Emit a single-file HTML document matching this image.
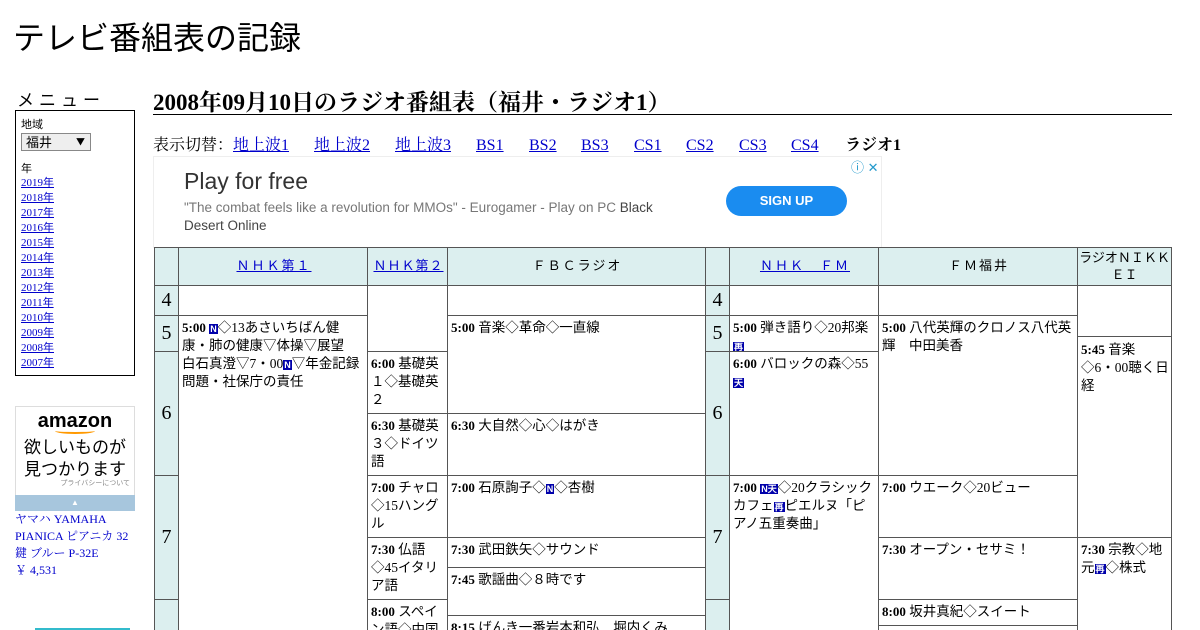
<!DOCTYPE html>
<html style="overflow:hidden;height:630px"><head><meta charset="utf-8"><style>
body{margin:0;width:1200px;height:630px;overflow:hidden;background:#fff;font-family:"Liberation Serif","Noto Serif CJK SC","Noto Sans CJK JP",serif;color:#000;position:relative}
.a{position:absolute}
a{color:#00c}
.c{position:absolute;box-sizing:border-box;border:1px solid #555;font-size:13.5px;line-height:18px;padding:3px 1px 0 3px;background:#fff;overflow:hidden;font-family:"Liberation Serif","Noto Sans CJK JP",serif}
.c b{font-size:13px}
.h{background:#dcefef;text-align:center;font-family:"Liberation Sans","Noto Sans CJK JP",sans-serif;font-size:13px;letter-spacing:2px;padding-top:9px}
.t{background:#dcefef;text-align:center;font-size:20px;padding:0}
.n{display:inline-block;background:#00a;color:#fff;font-size:9px;line-height:10px;padding:0 1px;font-family:"Liberation Sans",sans-serif;font-weight:bold}
.g{font-family:"Liberation Sans","Noto Sans CJK JP",sans-serif}
.l{position:absolute;top:137px;font-size:16px;line-height:18px;height:18px}
</style></head><body>
<div class="a g" style="left:13px;top:13px;font-size:32px;font-family:'Noto Sans CJK JP',sans-serif;font-weight:400">テレビ番組表の記録</div>
<div class="a g" style="left:17px;top:86px;font-size:17px;letter-spacing:5px;font-family:'Noto Sans CJK JP',sans-serif">メニュー</div>
<div class="a" style="left:15px;top:110px;width:118px;height:264px;border:1px solid #000;font-size:11px;font-family:'Noto Sans CJK JP',sans-serif">
<div style="margin:5px 0 0 5px">地域</div>
<div style="margin:1px 0 0 5px;width:64px;height:16px;border:1px solid #888;background:#eee;font-size:13px;line-height:16px;padding-left:4px;position:relative">福井<span style="position:absolute;right:5px;font-size:9px">▼</span></div>
<div style="margin:9px 0 0 5px">年</div>
<div style="margin:0 0 0 5px;line-height:15px;font-family:'Liberation Serif','Noto Sans CJK JP',serif"><a href="#">2019年</a><br><a href="#">2018年</a><br><a href="#">2017年</a><br><a href="#">2016年</a><br><a href="#">2015年</a><br><a href="#">2014年</a><br><a href="#">2013年</a><br><a href="#">2012年</a><br><a href="#">2011年</a><br><a href="#">2010年</a><br><a href="#">2009年</a><br><a href="#">2008年</a><br><a href="#">2007年</a></div>
</div>
<div class="a" style="left:15px;top:406px;width:118px;height:88px;border:1px solid #ddd;text-align:center;font-family:'Noto Sans CJK JP',sans-serif">
<div style="font-family:'Liberation Sans',sans-serif;font-weight:bold;font-size:20px;line-height:22px;margin-top:3px">amazon</div>
<div style="width:40px;height:4px;border-bottom:2px solid #f90;border-radius:0 0 50% 50%;margin:-4px auto 0"></div>
<div style="font-size:17px;line-height:22px;margin-top:1px">欲しいものが<br>見つかります</div>
<div style="font-size:7px;color:#888;text-align:right;padding-right:4px;line-height:9px">プライバシーについて</div></div>
<div class="a" style="left:15px;top:495px;width:120px;height:16px;background:#a7c6dd;color:#fff;text-align:center;font-size:8px;line-height:16px">▲</div>
<div class="a" style="left:15px;top:511px;width:125px;font-size:12px;line-height:17px;color:#00c">ヤマハ YAMAHA PIANICA ピアニカ 32 鍵 ブルー P-32E<br>￥ 4,531</div>
<div class="a" style="left:35px;top:628px;width:95px;height:2px;background:#3bc"></div>

<div class="a" style="left:153px;top:84px;font-size:23px;font-weight:bold">2008年09月10日のラジオ番組表（福井・ラジオ1）</div>
<div class="a" style="left:153px;top:114px;width:1019px;height:1px;background:#000"></div>
<div class="l" style="left:153px">表示切替：</div>
<a class="l" style="left:233px" href="#">地上波1</a>
<a class="l" style="left:314px" href="#">地上波2</a>
<a class="l" style="left:395px" href="#">地上波3</a>
<a class="l" style="left:476px" href="#">BS1</a>
<a class="l" style="left:529px" href="#">BS2</a>
<a class="l" style="left:581px" href="#">BS3</a>
<a class="l" style="left:634px" href="#">CS1</a>
<a class="l" style="left:686px" href="#">CS2</a>
<a class="l" style="left:739px" href="#">CS3</a>
<a class="l" style="left:791px" href="#">CS4</a>
<b class="l" style="left:845px">ラジオ1</b>
<div class="a" style="left:153px;top:156px;width:727px;height:90px;border:1px solid #eee;font-family:'Liberation Sans',sans-serif">
<div class="a" style="left:30px;top:11px;font-size:23px;color:#333">Play for free</div>
<div class="a" style="left:30px;top:42px;width:480px;font-size:13.5px;line-height:18px;color:#777">"The combat feels like a revolution for MMOs" - Eurogamer - Play on PC <span style="color:#444">Black Desert Online</span></div>
<div class="a" style="left:572px;top:29px;width:121px;height:30px;border-radius:15px;background:#1a8cf0;color:#fff;font-size:13px;font-weight:bold;text-align:center;line-height:30px">SIGN UP</div>
<div class="a" style="left:697px;top:0;font-size:13px;color:#29c">ⓘ ✕</div></div>

<div class="c h" style="left:154px;top:247px;width:25px;height:39px"></div>
<div class="c h" style="left:178px;top:247px;width:190px;height:39px"><a href="#">ＮＨＫ第１</a></div>
<div class="c h" style="left:367px;top:247px;width:81px;height:39px;letter-spacing:1px"><a href="#">ＮＨＫ第２</a></div>
<div class="c h" style="left:447px;top:247px;width:259px;height:39px">ＦＢＣラジオ</div>
<div class="c h" style="left:705px;top:247px;width:25px;height:39px"></div>
<div class="c h" style="left:729px;top:247px;width:150px;height:39px"><a href="#">ＮＨＫ　ＦＭ</a></div>
<div class="c h" style="left:878px;top:247px;width:200px;height:39px">ＦＭ福井</div>
<div class="c h" style="left:1077px;top:247px;width:95px;height:39px;padding:1px 0 0;line-height:17px;letter-spacing:0">ラジオＮＩＫＫ<br>ＥＩ</div>
<div class="c t" style="left:154px;top:285px;width:25px;height:31px;line-height:29px">4</div>
<div class="c t" style="left:154px;top:315px;width:25px;height:37px;line-height:35px">5</div>
<div class="c t" style="left:154px;top:351px;width:25px;height:125px;line-height:123px">6</div>
<div class="c t" style="left:154px;top:475px;width:25px;height:125px;line-height:123px">7</div>
<div class="c t" style="left:154px;top:599px;width:25px;height:40px"></div>
<div class="c t" style="left:705px;top:285px;width:25px;height:31px;line-height:29px">4</div>
<div class="c t" style="left:705px;top:315px;width:25px;height:37px;line-height:35px">5</div>
<div class="c t" style="left:705px;top:351px;width:25px;height:125px;line-height:123px">6</div>
<div class="c t" style="left:705px;top:475px;width:25px;height:125px;line-height:123px">7</div>
<div class="c t" style="left:705px;top:599px;width:25px;height:40px"></div>
<div class="c" style="left:178px;top:285px;width:190px;height:31px"></div>
<div class="c" style="left:178px;top:315px;width:190px;height:330px"><b>5:00</b> <span class="n">N</span>◇13あさいちばん健康・肺の健康▽体操▽展望　白石真澄▽7・00<span class="n">N</span>▽年金記録問題・社保庁の責任</div>
<div class="c" style="left:367px;top:285px;width:81px;height:67px"></div>
<div class="c" style="left:367px;top:351px;width:81px;height:63px"><b>6:00</b> 基礎英１◇基礎英２</div>
<div class="c" style="left:367px;top:413px;width:81px;height:63px"><b>6:30</b> 基礎英３◇ドイツ語</div>
<div class="c" style="left:367px;top:475px;width:81px;height:63px"><b>7:00</b> チャロ◇15ハングル</div>
<div class="c" style="left:367px;top:537px;width:81px;height:63px"><b>7:30</b> 仏語◇45イタリア語</div>
<div class="c" style="left:367px;top:599px;width:81px;height:40px"><b>8:00</b> スペイン語◇中国</div>
<div class="c" style="left:447px;top:285px;width:259px;height:31px"></div>
<div class="c" style="left:447px;top:315px;width:259px;height:99px"><b>5:00</b> 音楽◇革命◇一直線</div>
<div class="c" style="left:447px;top:413px;width:259px;height:63px"><b>6:30</b> 大自然◇心◇はがき</div>
<div class="c" style="left:447px;top:475px;width:259px;height:63px"><b>7:00</b> 石原詢子◇<span class="n">N</span>◇杏樹</div>
<div class="c" style="left:447px;top:537px;width:259px;height:31px"><b>7:30</b> 武田鉄矢◇サウンド</div>
<div class="c" style="left:447px;top:567px;width:259px;height:49px"><b>7:45</b> 歌謡曲◇８時です</div>
<div class="c" style="left:447px;top:615px;width:259px;height:30px"><b>8:15</b> げんき一番岩本和弘　堀内くみ</div>
<div class="c" style="left:729px;top:285px;width:150px;height:31px"></div>
<div class="c" style="left:729px;top:315px;width:150px;height:37px"><b>5:00</b> 弾き語り◇20邦楽<br><span class="n">再</span></div>
<div class="c" style="left:729px;top:351px;width:150px;height:125px"><b>6:00</b> バロックの森◇55<br><span class="n">天</span></div>
<div class="c" style="left:729px;top:475px;width:150px;height:170px"><b>7:00</b> <span class="n">N天</span>◇20クラシックカフェ<span class="n">再</span>ピエルヌ「ピアノ五重奏曲」</div>
<div class="c" style="left:878px;top:285px;width:200px;height:31px"></div>
<div class="c" style="left:878px;top:315px;width:200px;height:161px"><b>5:00</b> 八代英輝のクロノス八代英輝　中田美香</div>
<div class="c" style="left:878px;top:475px;width:200px;height:63px"><b>7:00</b> ウエーク◇20ビュー</div>
<div class="c" style="left:878px;top:537px;width:200px;height:63px"><b>7:30</b> オープン・セサミ！</div>
<div class="c" style="left:878px;top:599px;width:200px;height:27px"><b>8:00</b> 坂井真紀◇スイート</div>
<div class="c" style="left:878px;top:625px;width:200px;height:20px"></div>
<div class="c" style="left:1077px;top:285px;width:95px;height:52px"></div>
<div class="c" style="left:1077px;top:336px;width:95px;height:202px;padding-top:4px"><b>5:45</b> 音楽<br>◇6・00聴く日経</div>
<div class="c" style="left:1077px;top:537px;width:95px;height:110px"><b>7:30</b> 宗教◇地元<span class="n">再</span>◇株式</div>
</body></html>
